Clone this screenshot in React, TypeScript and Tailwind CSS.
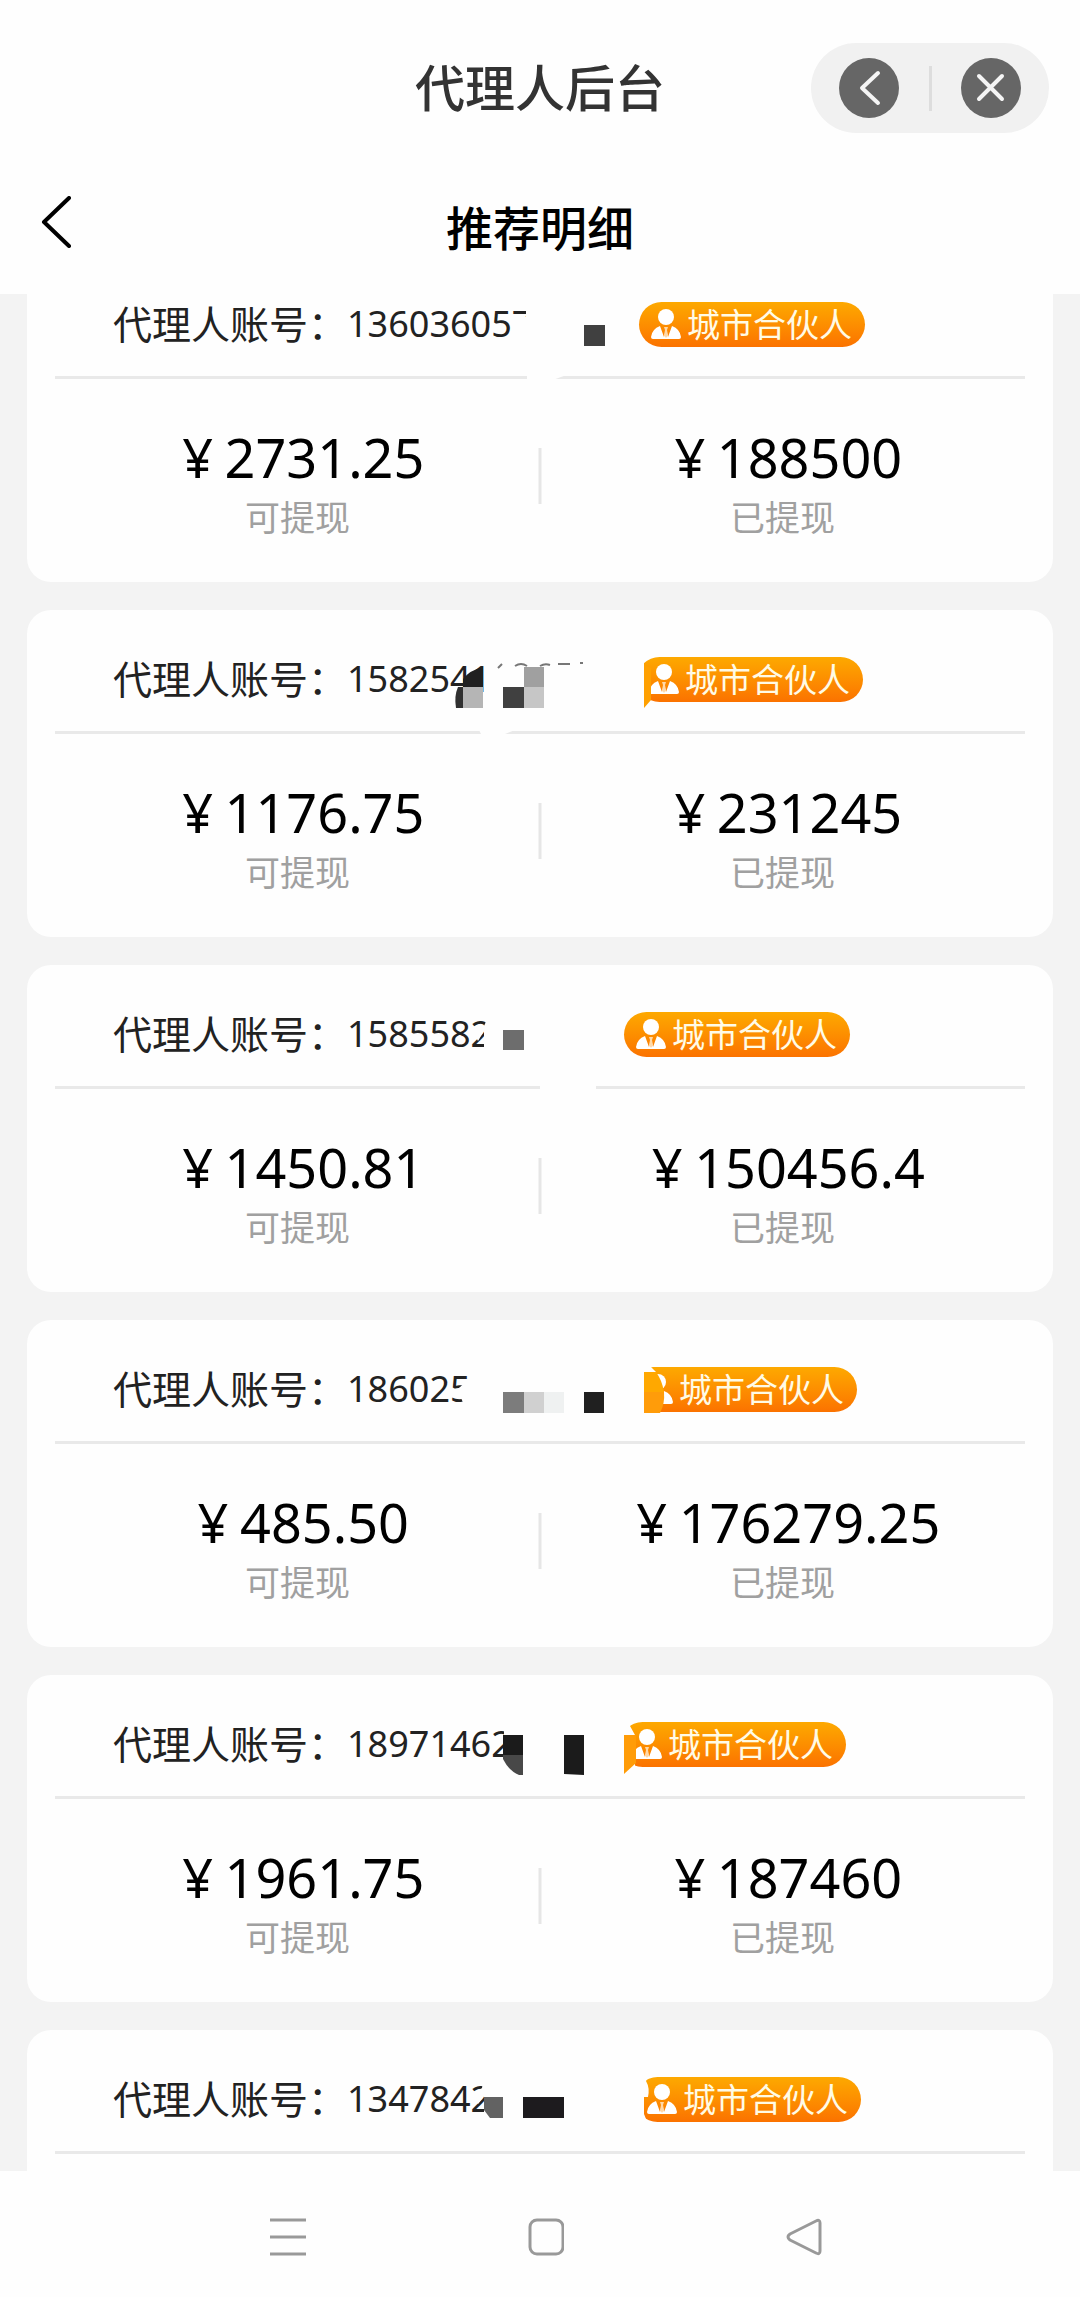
import { ReactNode } from "react";

type Agent = {
    account: string,
    accountWidth: string,
    available?: string,
    withdrawn?: string,
    cover: ReactNode
}

const agents: Agent[] = [
    {
        account: "136036057",
        accountWidth: "w-[292px]",
        available: "2731.25",
        withdrawn: "188500",
        cover: (
            <>
                <path d="M526 45H545V95H500L508 84L516 62H526Z" fill="#fefefe" />
                <path d="M527 118H572L550 126H527Z" fill="#fefefe" />
                <rect x="584" y="70" width="21" height="21" fill="#404040" />
            </>
        )
    },
    {
        account: "15825411",
        accountWidth: "w-[290px]",
        available: "1176.75",
        withdrawn: "231245",
        cover: (
            <>
                <path d="M484 50H524V95H484Z" fill="#fefefe" />
                <path d="M478 118H520L500 126H482Z" fill="#fefefe" />
                <path d="M463 77V69Q470 60 483 57V77Z" fill="#202020" />
                <path d="M463 77V98H456Q454 86 458 77Z" fill="#303030" />
                <rect x="463" y="77" width="20" height="21" fill="#b5b5b5" />
                <rect x="524" y="57" width="20" height="20" fill="#a0a0a0" />
                <rect x="503" y="77" width="21" height="21" fill="#404040" />
                <rect x="524" y="77" width="20" height="21" fill="#c6c6c6" />
                <path d="M498 58L502 54M515 56Q521 52 527 56M540 56Q545 53 550 55M558 54H570M580 53H583" fill="none" stroke="#777777" strokeWidth="2" />
                <path d="M636 46H650L644 52V95H636Z" fill="#fefefe" />
                <path d="M644 55L651 58V90L644 98Z" fill="#ffa000" />
            </>
        )
    },
    {
        account: "1585582",
        accountWidth: "w-[277px]",
        available: "1450.81",
        withdrawn: "150456.4",
        cover: (
            <>
                <path d="M489 50H500V92H484V66L478 76L472 64L484 61Z" fill="#fefefe" />
                <rect x="540" y="118" width="56" height="8" fill="#fefefe" />
                <rect x="503" y="65" width="21" height="20" fill="#6d6d6d" />
            </>
        )
    },
    {
        account: "186025",
        accountWidth: "w-[284px]",
        available: "485.50",
        withdrawn: "176279.25",
        cover: (
            <>
                <path d="M466 62H480V92H464Q464 76 454 72Z" fill="#fefefe" />
                <rect x="503" y="72" width="21" height="21" fill="#7c7c7c" />
                <rect x="524" y="72" width="20" height="21" fill="#d0d0d0" />
                <rect x="544" y="72" width="20" height="21" fill="#eff1f1" />
                <rect x="584" y="72" width="20" height="21" fill="#202020" />
                <path d="M628 44H648L656 52V94H628Z" fill="#fefefe" />
                <path d="M644 52H656Q662 60 664 72H644Z" fill="#ffa800" />
                <path d="M644 72H664Q665 84 660 93H644Z" fill="#ff9c0a" />
            </>
        )
    },
    {
        account: "18971462",
        accountWidth: "w-[273px]",
        available: "1961.75",
        withdrawn: "187460",
        cover: (
            <>
                <path d="M504 45H524V92H504Z" fill="#fefefe" />
                <path d="M503 60H523V80H503Z" fill="#1b1b1b" />
                <path d="M503 80H523V100H519Q509 96 503 84Z" fill="#484848" />
                <path d="M564 60H584V100L564 99Z" fill="#1b1b1b" />
                <path d="M618 44H634L630 51L635 60V92H618Z" fill="#fefefe" />
                <path d="M624 60H636V88L624 99Z" fill="#ff9c08" />
            </>
        )
    },
    {
        account: "1347842",
        accountWidth: "w-[288px]",
        cover: (
            <>
                <path d="M484 45H500V92H484V66L478 74L472 66L482 58Z" fill="#fefefe" />
                <path d="M484 67H503V88H490L484 80Z" fill="#626262" />
                <rect x="523" y="67" width="41" height="21" fill="#1d1b1e" />
                <path d="M632 44H650L646 51Q650 58 648 67H644V84L648 94H632Z" fill="#fefefe" />
            </>
        )
    }
];

function PersonIcon() {
    return (
        <svg width="30" height="30" viewBox="0 0 30 30" fill="white" aria-hidden="true">
            <circle cx="15" cy="8" r="8" />
            <path d="M9 17L13 28L15 20L17 28L21 17Q29 20 30 28Q30 30 28 30H2Q0 30 0 28Q1 20 9 17Z" />
            <path d="M13 18H17L16 21L17 26L15 29L13 26L14 21Z" fill="#ffd9a8" />
        </svg>
    )
}

function PartnerBadge() {
    return (
        <span className="flex h-[45px] w-[226px] shrink-0 items-center gap-[6px] rounded-full bg-linear-to-b from-[#fda900] to-[#fb7200] pl-3 text-[33px] leading-[45px] text-[#fffbe6]">
            <PersonIcon />
            城市合伙人
        </span>
    )
}

function Amount({ value, label }: { value: string, label: string }) {
    return (
        <div className="flex flex-col items-center">
            <dd className="flex h-[74px] items-center text-[54px] leading-[74px] text-black">
                <span className="w-[54px] text-center">¥</span>
                {value}
            </dd>
            <dt className="order-last text-[35px] leading-[48px] text-[#a0a0a0]">{label}</dt>
        </div>
    )
}

function AgentCard({ agent }: { agent: Agent }) {
    return (
        <li className="relative h-[327px] shrink-0 overflow-hidden rounded-3xl bg-[#fefefe] px-7">
            <div className="flex h-[124px] items-center border-b-3 border-[#e9e9e9] pt-[17px] pl-[58px] text-[39px] text-[#222222]">
                <span className="shrink-0">代理人账号：</span>
                <span className={`shrink-0 text-[36px] ${agent.accountWidth}`}>{agent.account}</span>
                <PartnerBadge />
            </div>
            <svg className="absolute top-0 left-0" width="1026" height="130" viewBox="27 0 1026 130" aria-hidden="true">
                {agent.cover}
            </svg>
            {agent.available && agent.withdrawn && (
                <dl className="relative grid grid-cols-2 pt-[41px]">
                    <Amount value={agent.available} label="可提现" />
                    <Amount value={agent.withdrawn} label="已提现" />
                    <span className="absolute top-[69px] left-1/2 h-14 w-[3px] -translate-x-1/2 bg-[#e6e6e6]" />
                </dl>
            )}
        </li>
    )
}

export default function App() {
    return (
        <div className="flex h-screen flex-col bg-[#f3f3f3] font-['Noto_Sans','Noto_Sans_CJK_SC',sans-serif]">
            <header className="relative z-10 h-[294px] shrink-0 bg-[#fefefe]">
                <div className="grid h-44 grid-cols-[1fr_auto_1fr] items-center px-[31px]">
                    <p className="col-start-2 text-[50px] leading-[60px] font-medium text-[#333333]">代理人后台</p>
                    <div className="flex h-[90px] w-[238px] items-center justify-between justify-self-end rounded-full bg-[#f1f1f1] px-7">
                        <button type="button" aria-label="返回" className="size-[60px] rounded-full bg-[#666666]">
                            <svg width="60" height="60" viewBox="0 0 60 60" fill="none" stroke="#f5f5f5" strokeWidth="4" strokeLinecap="round" strokeLinejoin="round">
                                <path d="M39 15L23 30L39 45" />
                            </svg>
                        </button>
                        <span className="h-[45px] w-[3px] bg-[#dddddd]" />
                        <button type="button" aria-label="关闭" className="size-[60px] rounded-full bg-[#666666]">
                            <svg width="60" height="60" viewBox="0 0 60 60" fill="none" stroke="#f5f5f5" strokeWidth="4" strokeLinecap="round">
                                <path d="M18 18L41 41M41 18L18 41" />
                            </svg>
                        </button>
                    </div>
                </div>
                <div className="grid h-[104px] grid-cols-[1fr_auto_1fr] items-center px-10">
                    <button type="button" aria-label="后退" className="w-8 pb-3">
                        <svg width="32" height="52" viewBox="0 0 32 52" fill="none" stroke="black" strokeWidth="4" strokeLinecap="round" strokeLinejoin="round">
                            <path d="M29 2L4 26L29 50" />
                        </svg>
                    </button>
                    <h1 className="text-[47px] leading-[60px] font-medium text-black">推荐明细</h1>
                </div>
            </header>
            <ul className="flex min-h-0 flex-1 flex-col gap-7 overflow-hidden px-[27px]">
                <li className="-mb-[67px] shrink-0" />
                {agents.map(agent => <AgentCard key={agent.account} agent={agent} />)}
            </ul>
            <nav className="flex h-[126px] shrink-0 items-center justify-center gap-[222px] bg-[#fefefe] pt-[6px] pl-3">
                <button type="button" aria-label="菜单">
                    <svg width="36" height="40" viewBox="0 0 36 40" stroke="#999999" strokeWidth="3">
                        <path d="M0 3H36M0 20H36M0 37H36" />
                    </svg>
                </button>
                <button type="button" aria-label="主页">
                    <svg width="36" height="40" viewBox="0 0 36 40" fill="none" stroke="#999999" strokeWidth="3">
                        <rect x="2" y="3" width="33" height="34" rx="7" />
                    </svg>
                </button>
                <button type="button" aria-label="返回上一页">
                    <svg width="36" height="40" viewBox="0 0 36 40" fill="none" stroke="#999999" strokeWidth="3" strokeLinejoin="round">
                        <path d="M30 4Q34 2 34 6V34Q34 38 30 36L4 23Q0 20 4 17Z" />
                    </svg>
                </button>
            </nav>
        </div>
    )
}
